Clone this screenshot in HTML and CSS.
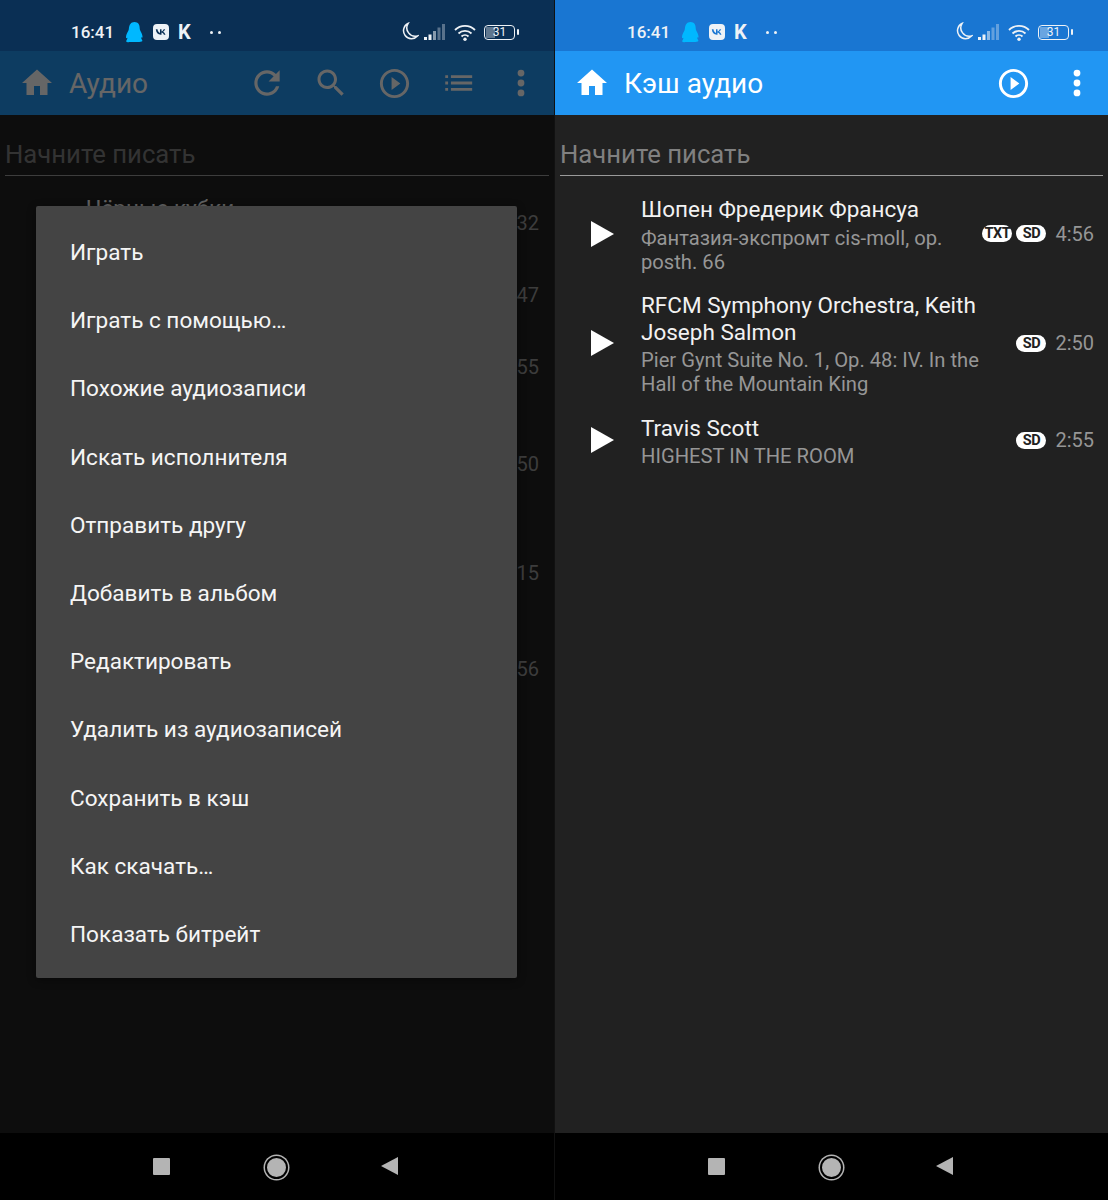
FILE: index.html
```html
<!DOCTYPE html>
<html lang="ru">
<head>
<meta charset="utf-8">
<title>Аудио</title>
<link rel="stylesheet" href="styles.css">
</head>
<body>
<svg class="defs" width="0" height="0" aria-hidden="true">
  <defs>
    <symbol id="i-home" viewBox="0 0 24 24"><path d="M10 20v-6h4v6h5v-8h3L12 3 2 12h3v8z"/></symbol>
    <symbol id="i-refresh" viewBox="0 0 24 24"><path d="M17.65 6.35C16.2 4.9 14.21 4 12 4c-4.42 0-7.99 3.58-7.99 8s3.57 8 7.99 8c3.73 0 6.84-2.55 7.73-6h-2.08c-.82 2.33-3.04 4-5.65 4-3.31 0-6-2.69-6-6s2.69-6 6-6c1.66 0 3.14.69 4.22 1.78L13 11h7V4l-2.35 2.35z"/></symbol>
    <symbol id="i-search" viewBox="0 0 24 24"><path d="M15.5 14h-.79l-.28-.27C15.41 12.59 16 11.11 16 9.5 16 5.91 13.09 3 9.5 3S3 5.91 3 9.5 5.91 16 9.5 16c1.61 0 3.09-.59 4.23-1.57l.27.28v.79l5 4.99L20.49 19l-4.99-5zm-6 0C7.01 14 5 11.99 5 9.5S7.01 5 9.5 5 14 7.01 14 9.5 11.99 14 9.5 14z"/></symbol>
    <symbol id="i-play-circle" viewBox="0 0 24 24"><path d="M10 16.5l6-4.5-6-4.5v9zM12 2C6.48 2 2 6.48 2 12s4.48 10 10 10 10-4.48 10-10S17.52 2 12 2zm0 18c-4.41 0-8-3.59-8-8s3.59-8 8-8 8 3.59 8 8-3.59 8-8 8z"/></symbol>
    <symbol id="i-list" viewBox="0 0 24 24"><path d="M3 6.5h2v2H3zM7 6.5h15v2H7zM3 11h2v2H3zM7 11h15v2H7zM3 15.500h2v2H3zM7 15.500h15v2H7z"/></symbol>
    <symbol id="i-dots" viewBox="0 0 24 24"><circle cx="12" cy="5" r="2.400"/><circle cx="12" cy="12" r="2.400"/><circle cx="12" cy="19" r="2.400"/></symbol>
    <symbol id="i-play" viewBox="0 0 24 28"><path d="M1 1l23 13L1 27z"/></symbol>
    <symbol id="i-qq" viewBox="0 0 18 22"><path d="M9 0c4 0 5.500 3 5.500 6.500 0 1 .2 1.800.8 2.800 1.200 2 2.200 4.200 2.200 6.200 0 1-.5 1.300-1.500.5.100 1.500.8 2.500 1.300 3.500.3 1-.8 1.500-3.300 1.500H3.500C1 21.500-.1 21 .2 20c.5-1 1.200-2 1.300-3.500-1 .8-1.500.5-1.500-.5 0-2 1-4.200 2.200-6.200.6-1 .8-1.800.8-2.800C3.500 3 5 0 9 0z"/></symbol>
    <symbol id="i-vk" viewBox="0 0 16 16"><path fill-rule="evenodd" d="M4 0h8a4 4 0 0 1 4 4v8a4 4 0 0 1-4 4H4a4 4 0 0 1-4-4V4a4 4 0 0 1 4-4zM2.800 5.300c.3 3.200 2 5.400 5 5.400h.7V8.600c1 .1 1.900.9 2.400 2.100h1.600c-.6-1.500-1.500-2.400-2.400-2.900.8-.5 1.600-1.300 2.100-2.500h-1.500c-.4 1.100-1.300 2-2.200 2.100V5.300H7v3.600C6 8.600 4.700 7.500 4.500 5.300z"/></symbol>
    <symbol id="i-moon" viewBox="0 0 18 20"><path d="M7 1.500a8 8 0 1 0 9.500 12.500A8.500 8.500 0 0 1 7 1.500z" fill="none" stroke="currentColor" stroke-width="1.500"/></symbol>
    <symbol id="i-signal" viewBox="0 0 22 16"><rect x="0" y="13" width="3" height="3"/><rect x="4.500" y="10.500" width="3" height="5.500"/><rect x="9" y="7" width="3" height="9" opacity=".55"/><rect x="13.500" y="3.500" width="3" height="12.500" opacity=".35"/><rect x="18" y="0" width="3" height="16" opacity=".35"/></symbol>
    <symbol id="i-wifi" viewBox="0 0 22 17"><g fill="none" stroke="currentColor" stroke-width="1.800"><path d="M1 6a14 14 0 0 1 20 0"/><path d="M4.500 9.500a9.500 9.500 0 0 1 13 0"/><path d="M7.500 12.500a5 5 0 0 1 7 0"/></g><circle cx="11" cy="15.300" r="1.700"/></symbol>
  </defs>
</svg>

<main class="screen">
  <section class="phone phone-left">
    <div class="status">
      <span class="clock">16:41</span>
      <svg class="st-qq"><use href="#i-qq"/></svg>
      <svg class="st-vk"><use href="#i-vk"/></svg>
      <span class="st-k">K</span>
      <span class="st-more"><i></i><i></i></span>
      <span class="st-spacer"></span>
      <svg class="st-moon"><use href="#i-moon"/></svg>
      <svg class="st-signal"><use href="#i-signal"/></svg>
      <svg class="st-wifi"><use href="#i-wifi"/></svg>
      <span class="battery"><span class="battery-level"></span><span class="battery-text">31</span></span>
    </div>
    <header class="toolbar">
      <svg class="home"><use href="#i-home"/></svg>
      <h1 class="toolbar-title">Аудио</h1>
      <span class="toolbar-spacer"></span>
      <span class="action"><svg class="ic-refresh"><use href="#i-refresh"/></svg></span>
      <span class="action"><svg class="ic-search"><use href="#i-search"/></svg></span>
      <span class="action"><svg class="ic-play"><use href="#i-play-circle"/></svg></span>
      <span class="action"><svg class="ic-list"><use href="#i-list"/></svg></span>
      <span class="action"><svg class="ic-dots"><use href="#i-dots"/></svg></span>
    </header>
    <div class="content">
      <div class="search">Начните писать</div>
      <div class="rows">
        <div class="ghost ghost-a"><span class="ghost-title">Чёрные кубки</span><span class="duration">32</span></div>
        <div class="ghost ghost-a"><span class="duration">47</span></div>
        <div class="ghost ghost-a"><span class="duration">55</span></div>
        <div class="ghost ghost-b"><span class="duration">50</span></div>
        <div class="ghost ghost-c"><span class="duration">15</span></div>
        <div class="ghost ghost-c"><span class="duration">56</span></div>
      </div>
    </div>
    <nav class="navbar">
      <span class="nav-square"></span>
      <span class="nav-home"></span>
      <span class="nav-back"></span>
    </nav>
    <div class="scrim"></div>
    <ul class="menu">
      <li>Играть</li>
      <li>Играть с помощью…</li>
      <li>Похожие аудиозаписи</li>
      <li>Искать исполнителя</li>
      <li>Отправить другу</li>
      <li>Добавить в альбом</li>
      <li>Редактировать</li>
      <li>Удалить из аудиозаписей</li>
      <li>Сохранить в кэш</li>
      <li>Как скачать…</li>
      <li>Показать битрейт</li>
    </ul>
  </section>

  <section class="phone phone-right">
    <div class="status">
      <span class="clock">16:41</span>
      <svg class="st-qq"><use href="#i-qq"/></svg>
      <svg class="st-vk"><use href="#i-vk"/></svg>
      <span class="st-k">K</span>
      <span class="st-more"><i></i><i></i></span>
      <span class="st-spacer"></span>
      <svg class="st-moon"><use href="#i-moon"/></svg>
      <svg class="st-signal"><use href="#i-signal"/></svg>
      <svg class="st-wifi"><use href="#i-wifi"/></svg>
      <span class="battery"><span class="battery-level"></span><span class="battery-text">31</span></span>
    </div>
    <header class="toolbar">
      <svg class="home"><use href="#i-home"/></svg>
      <h1 class="toolbar-title">Кэш аудио</h1>
      <span class="toolbar-spacer"></span>
      <span class="action"><svg class="ic-play"><use href="#i-play-circle"/></svg></span>
      <span class="action"><svg class="ic-dots"><use href="#i-dots"/></svg></span>
    </header>
    <div class="content">
      <div class="search">Начните писать</div>
      <div class="rows">
        <article class="track">
          <svg class="track-play"><use href="#i-play"/></svg>
          <div class="track-text">
            <div class="track-title">Шопен Фредерик Франсуа</div>
            <div class="track-sub">Фантазия-экспромт cis-moll, op. posth. 66</div>
          </div>
          <span class="pill">TXT</span><span class="pill">SD</span>
          <span class="duration">4:56</span>
        </article>
        <article class="track">
          <svg class="track-play"><use href="#i-play"/></svg>
          <div class="track-text">
            <div class="track-title">RFCM Symphony Orchestra, Keith Joseph Salmon</div>
            <div class="track-sub">Pier Gynt Suite No. 1, Op. 48: IV. In the Hall of the Mountain King</div>
          </div>
          <span class="pill">SD</span>
          <span class="duration">2:50</span>
        </article>
        <article class="track">
          <svg class="track-play"><use href="#i-play"/></svg>
          <div class="track-text">
            <div class="track-title">Travis Scott</div>
            <div class="track-sub">HIGHEST IN THE ROOM</div>
          </div>
          <span class="pill">SD</span>
          <span class="duration">2:55</span>
        </article>
      </div>
    </div>
    <nav class="navbar">
      <span class="nav-square"></span>
      <span class="nav-home"></span>
      <span class="nav-back"></span>
    </nav>
  </section>
</main>
</body>
</html>
```

FILE: styles.css
```css
* { box-sizing: border-box; }
html, body { margin: 0; padding: 0; background: #111; }
body { font-family: Roboto, "Noto Sans", sans-serif; color: #fff; }
.defs { position: absolute; }
svg { display: block; fill: currentColor; }

.screen { display: flex; gap: 1px; width: 1108px; height: 1200px; overflow: hidden; }
.phone { position: relative; width: 554px; height: 1200px; display: flex; flex-direction: column; background: #212121; flex: none; }
.phone-right { width: 553px; }

/* status bar */
.status { height: 51px; flex: none; display: flex; align-items: center; padding: 13px 35px 0 71px; background: #0a2f54; color: #eef2f6; }
.phone-right .status { background: #1976d2; padding-left: 72px; padding-right: 35px; }
.clock { font-size: 17px; font-weight: 500; width: 46px; line-height: 20px; }
.st-qq { width: 17px; height: 21px; margin-left: 9px; color: #00b8ff; }
.st-vk { width: 16px; height: 16px; margin-left: 10px; }
.st-k { font-size: 20px; font-weight: 700; line-height: 20px; width: 15px; margin-left: 9px; }
.st-more { display: flex; gap: 5px; margin-left: 17px; }
.st-more i { width: 3px; height: 3px; border-radius: 50%; background: currentColor; }
.st-spacer { flex: 1; }
.st-moon { width: 18px; height: 20px; }
.st-signal { width: 22px; height: 16px; margin-left: 5px; }
.st-wifi { width: 22px; height: 17px; margin-left: 8px; }
.battery { position: relative; width: 31px; height: 15px; margin-left: 8px; margin-right: 4px; border: 1.500px solid currentColor; border-radius: 4px; display: block; }
.battery::after { content: ""; position: absolute; right: -5px; top: 3px; width: 2px; height: 6px; border-radius: 1px; background: currentColor; }
.battery-level { position: absolute; left: 1px; top: 1px; bottom: 1px; width: 9px; background: rgba(255,255,255,.35); }
.battery-text { position: absolute; inset: 0; text-align: center; font-size: 12px; line-height: 12px; }

/* toolbar */
.toolbar { height: 64px; flex: none; display: flex; align-items: center; background: #2196f3; color: #fff; padding-left: 19px; }
.phone-left .toolbar { padding-right: 1px; }
.phone-right .toolbar { margin-right: -1px; }
.home { width: 36px; height: 36px; }
.toolbar-title { margin: 2px 0 0 14px; font-size: 28px; font-weight: 400; line-height: 32px; }
.toolbar-spacer { flex: 1; }
.action { width: 63.500px; height: 64px; display: flex; align-items: center; justify-content: center; }
.ic-refresh { width: 38px; height: 38px; }
.ic-search { width: 36px; height: 36px; }
.ic-play { width: 35px; height: 35px; }
.ic-list { width: 34px; height: 34px; }
.ic-dots { width: 34px; height: 34px; }

/* content */
.content { flex: 1; padding: 24px 0 0; background: #212121; }
.search { margin: 0 5px; height: 37px; line-height: 30px; font-size: 25.700px; color: #808080; border-bottom: 1.500px solid #9a9a9a; }
.rows { margin-top: 11px; }
.track { display: flex; align-items: center; padding: 9px 14px 9.250px 35px; }
.track-play { width: 24px; height: 28px; flex: none; margin-right: 27px; margin-bottom: 2px; }
.track-text { flex: 1; min-width: 0; padding-right: 4px; }
.track-title { font-size: 22.500px; line-height: 27px; color: #f2f2f2; }
.track-sub { font-size: 20.200px; line-height: 24px; color: #969696; margin-top: 2.500px; }
.pill { flex: none; width: 30px; height: 17px; border-radius: 9px; background: #fff; color: #212121; font-size: 14.500px; font-weight: 700; line-height: 17px; text-align: center; margin-left: 4px; margin-bottom: 2px; letter-spacing: -.5px; }
.duration { flex: none; font-size: 20px; line-height: 24px; color: #969696; margin-left: 9px; margin-bottom: 2px; }

/* dimmed background list */
.ghost { display: flex; align-items: center; justify-content: flex-end; padding-right: 15px; position: relative; }
.ghost .duration { margin-bottom: 0; }
.ghost-a { height: 72px; }
.ghost-b { height: 122px; }
.ghost-c { height: 96px; }
.ghost-title { position: absolute; left: 86px; top: 8px; font-size: 22.500px; line-height: 27px; color: #f2f2f2; }

/* nav bar */
.navbar { height: 67px; flex: none; background: #000; position: relative; }
.nav-square { position: absolute; left: 153px; top: 25px; width: 17px; height: 17px; background: #b4b4b4; border-radius: 1px; }
.nav-home { position: absolute; left: 265px; top: 22.500px; width: 23px; height: 23px; border-radius: 50%; background: #b4b4b4; border: 2px solid #000; box-shadow: 0 0 0 1.500px #b4b4b4; }
.nav-back { position: absolute; left: 381px; top: 24px; width: 0; height: 0; border-style: solid; border-width: 9.500px 17px 9.500px 0; border-color: transparent #b4b4b4 transparent transparent; }

/* overlay */
.scrim { position: absolute; left: 0; right: 0; top: 51px; bottom: 67px; background: rgba(0,0,0,.6); }
.menu { position: absolute; left: 36px; top: 206px; width: 481px; height: 772px; margin: 0; padding: 13px 0 11px; list-style: none; background: #444; border-radius: 2px; box-shadow: 0 2px 8px rgba(0,0,0,.4); }
.menu li { height: 68.200px; line-height: 68.200px; padding-left: 34px; font-size: 22.550px; color: #f5f5f5; }
```
